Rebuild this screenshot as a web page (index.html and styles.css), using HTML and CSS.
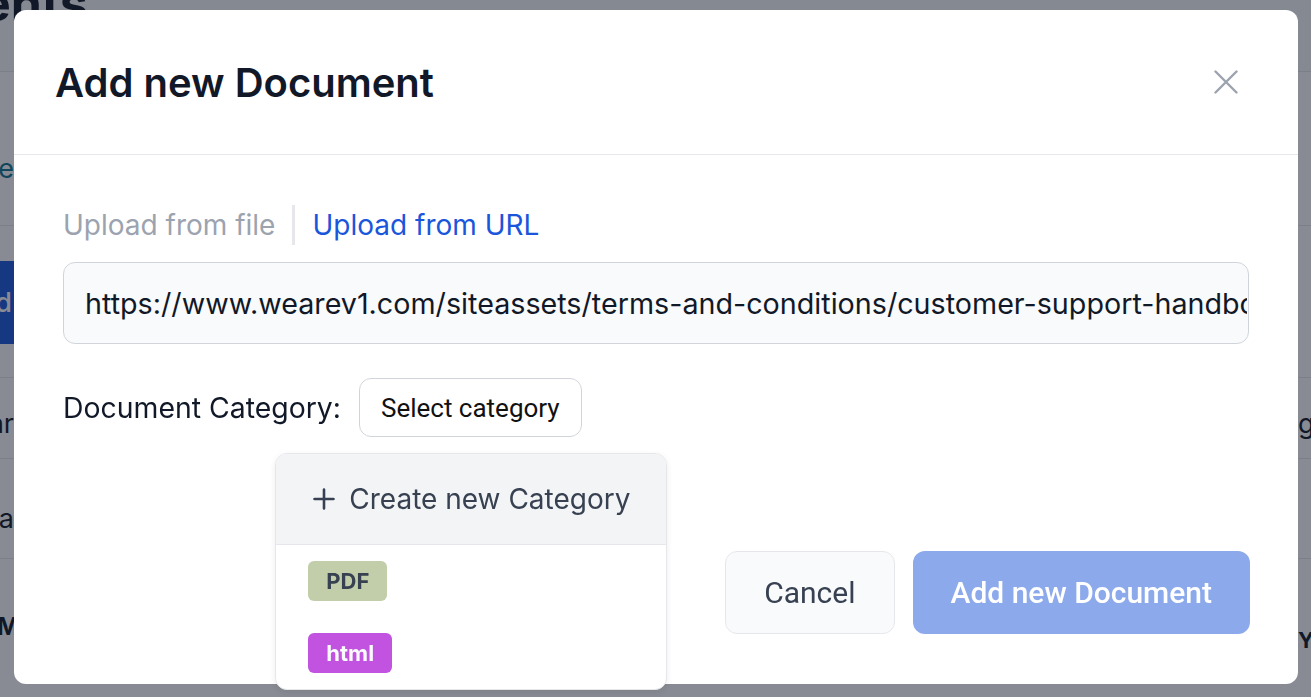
FILE: index.html
```html
<html>
<head>
<meta charset="utf-8">
<link rel="stylesheet" href="styles.css">
</head>
<body>

<div class="page">
  <div class="page-head">
    <h1 class="page-title">Documents</h1>
  </div>
  <div class="page-row row-tabs">
    <div class="cut"><span class="link">Shared with me</span></div>
  </div>
  <div class="page-row row-action">
    <div class="cut cut-action"><span class="blue-btn">Upload and Add</span></div>
  </div>
  <div class="page-row row-search">
    <div class="cut"><span>Search bar</span></div>
    <span class="right-txt">grouped</span>
  </div>
  <div class="page-row row-date">
    <div class="cut"><span>Agenda</span></div>
  </div>
  <div class="page-row row-cols">
    <div class="cut cut-cols"><b>NAME</b></div>
    <b class="right-txt">YEAR</b>
  </div>
</div>

<div class="overlay">
  <div class="modal">
    <div class="modal-head">
      <h2 class="modal-title">Add new Document</h2>
      <button class="close-btn" type="button">
        <svg width="24" height="24" viewBox="0 0 24 24" fill="none" stroke="#9ca3af" stroke-width="2.4" stroke-linecap="round"><path d="M1.5 1.5 22.5 22.5M22.5 1.5 1.5 22.5"/></svg>
      </button>
    </div>

    <div class="modal-body">
      <div class="tabs">
        <span class="tab">Upload from file</span>
        <span class="tab-sep"></span>
        <span class="tab active">Upload from URL</span>
      </div>
      <input class="url-input" type="text" value="https://www.wearev1.com/siteassets/terms-and-conditions/customer-support-handbook.pdf">

      <div class="cat-row">
        <span class="cat-label">Document Category:</span>
        <div class="cat-wrap">
          <button class="cat-btn" type="button">Select category</button>
          <div class="dropdown">
            <div class="dd-create">
              <svg width="22" height="22" viewBox="0 0 22 22" fill="none" stroke="#374151" stroke-width="2.6" stroke-linecap="round"><path d="M11 1.5v19M1.5 11h19"/></svg>
              <span>Create new Category</span>
            </div>
            <div class="dd-item"><span class="tag tag-pdf">PDF</span></div>
            <div class="dd-item"><span class="tag tag-html">html</span></div>
          </div>
        </div>
      </div>
    </div>

    <div class="modal-foot">
      <button class="btn btn-cancel" type="button">Cancel</button>
      <button class="btn btn-add" type="button">Add new Document</button>
    </div>
  </div>
</div>

</body>
</html>
```

FILE: styles.css
```css
body
{
  margin:0;
  width:1311px;
  height:697px;
  overflow:hidden;
  font-family:Inter, "Noto Sans", sans-serif;
  background:#fff;
}

/* page behind the modal */
.page
{
  width:1311px;
  color:#111827;
}
.page-head
{
  height:71px;
  border-bottom:1px solid #e5e7eb;
  background:#f9fafb;
  overflow:hidden;
}
.page-title
{
  margin:-22px 0 0 -192px;
  font-size:50px;
  font-weight:700;
  line-height:1;
  color:#111827;
  white-space:nowrap;
}
.page-row
{
  display:flex;
  align-items:center;
  justify-content:space-between;
  border-bottom:1px solid #e5e7eb;
  font-size:27px;
  overflow:hidden;
}
.cut
{
  width:14px;
  overflow:hidden;
  display:flex;
  justify-content:flex-end;
  white-space:nowrap;
  flex-shrink:0;
}
.row-tabs
{
  height:153px;
  align-items:flex-end;
}
.row-tabs .cut
{
  padding-bottom:40px;
}
.link
{
  color:#0e7490;
}
.row-action
{
  height:151px;
}
.cut-action
{
  margin-top:2px;
}
.blue-btn
{
  display:block;
  background:#1a56db;
  color:#fff;
  height:83px;
  line-height:83px;
  padding:0 2px 0 20px;
  font-weight:500;
}
.row-search
{
  height:81px;
  padding-top:10px;
  box-sizing:border-box;
}
.row-date
{
  height:100px;
  padding-top:20px;
  box-sizing:border-box;
}
.row-cols
{
  height:138px;
  align-items:flex-end;
  font-size:24px;
}
.cut-cols
{
  width:34px;
  padding-bottom:56px;
}
.right-txt
{
  white-space:nowrap;
  width:13px;
  overflow:hidden;
}
.row-cols .right-txt
{
  font-size:22px;
  padding-bottom:44px;
}

/* modal */
.overlay
{
  position:fixed;
  top:0;
  left:0;
  right:0;
  bottom:0;
  background:rgba(17,24,39,0.5);
  padding:10px 13px 13px 14px;
  box-sizing:border-box;
}
.modal
{
  background:#fff;
  border-radius:12px;
  height:674px;
  display:flex;
  flex-direction:column;
}
.modal-head
{
  height:144px;
  flex-shrink:0;
  border-bottom:1px solid #e5e7eb;
  display:flex;
  align-items:center;
  justify-content:space-between;
  padding:0 48px 0 41px;
}
.modal-title
{
  margin:0;
  font-size:40px;
  font-weight:600;
  color:#111827;
}
.close-btn
{
  width:48px;
  height:48px;
  border:none;
  background:none;
  padding:0;
  display:flex;
  align-items:center;
  justify-content:center;
}
.modal-body
{
  height:345px;
  flex-shrink:0;
  padding:50px 49px 0 49px;
  box-sizing:border-box;
}
.tabs
{
  display:flex;
  align-items:center;
  height:40px;
  font-size:28px;
}
.tab
{
  color:#9ca3af;
}
.tab.active
{
  color:#1a56db;
}
.tab-sep
{
  width:3px;
  height:40px;
  background:#e5e7eb;
  margin:0 17px 0 17px;
}
.url-input
{
  display:block;
  margin-top:17px;
  width:100%;
  height:82px;
  box-sizing:border-box;
  border:1px solid #d1d5db;
  border-radius:12px;
  background:#f9fafb;
  padding:0 1px 0 21px;
  font-family:Inter, sans-serif;
  font-size:28.7px;
  color:#111827;
}
.cat-row
{
  display:flex;
  align-items:center;
  margin-top:34px;
}
.cat-label
{
  font-size:28.4px;
  color:#111827;
  margin-right:18px;
}
.cat-wrap
{
  position:relative;
}
.cat-btn
{
  height:59px;
  padding:0 21px;
  border:1px solid #d1d5db;
  border-radius:12px;
  background:#fff;
  font-family:Roboto, sans-serif;
  font-size:26px;
  color:#111;
}
.dropdown
{
  position:absolute;
  top:calc(100% + 16px);
  left:50%;
  width:390px;
  margin-left:-195px;
  background:#fff;
  border:1px solid #e5e7eb;
  border-radius:12px;
  box-shadow:0 2px 6px rgba(0,0,0,0.08);
  overflow:hidden;
  z-index:2;
}
.dd-create
{
  height:90px;
  background:#f3f4f6;
  border-bottom:1px solid #e5e7eb;
  display:flex;
  align-items:center;
  gap:14px;
  padding-left:37px;
  font-size:28px;
  color:#374151;
}
.dd-item
{
  padding:16px 32px;
}
.tag
{
  display:inline-block;
  height:40px;
  line-height:40px;
  padding:0 18px;
  border-radius:6px;
  font-size:22px;
  font-weight:700;
}
.tag-pdf
{
  background:#c2cea9;
  color:#374151;
}
.tag-html
{
  background:#c153e0;
  color:#f9fafb;
}
.modal-foot
{
  flex:1;
  display:flex;
  justify-content:flex-end;
  align-items:flex-start;
  gap:18px;
  padding:51px 48px 0 0;
}
.btn
{
  height:83px;
  border-radius:12px;
  font-family:Roboto, sans-serif;
  font-size:30px;
  padding:0 38px;
}
.btn-cancel
{
  background:#f9fafb;
  border:1px solid #e5e7eb;
  color:#374151;
}
.btn-add
{
  background:#8ca9ec;
  border:none;
  color:#fff;
  font-weight:500;
}
```
